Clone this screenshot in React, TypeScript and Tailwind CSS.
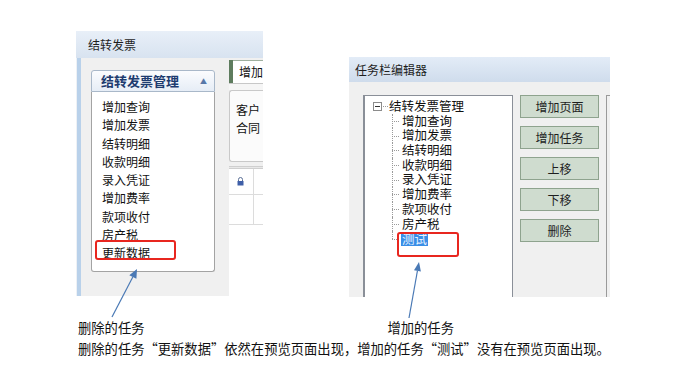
const cjk = "font-['Noto_Sans_CJK_SC','Liberation_Sans',sans-serif]";

const leftItems = ["增加查询", "增加发票", "结转明细", "收款明细", "录入凭证", "增加费率", "款项收付", "房产税", "更新数据"];
const treeItems = ["增加查询", "增加发票", "结转明细", "收款明细", "录入凭证", "增加费率", "款项收付", "房产税", "测试"];
const buttons = ["增加页面", "增加任务", "上移", "下移", "删除"];

function PreviewShot() {
  return (
    <div className="ml-[76px] mt-[31px] flex h-[265px] w-[187px] flex-col">
      <div className="flex h-[27px] items-center bg-linear-to-b from-[#e8eff8] to-[#d8e3f0] pl-[12px] text-[12px] text-[#1e1e1e]">
        结转发票
      </div>
      <div className="flex flex-1">
        <div className="w-[2px] bg-[#eef1f5]" />
        <div className="w-[7px] bg-[#b9d1ea]" />
        <div className="flex flex-1 bg-[#f0f0f0]">
          <div className="ml-[10px] mt-[12px] flex h-[202px] w-[124px] flex-col">
            <div className="flex h-[22px] items-center justify-between rounded-t-[3px] border border-[#a9b8c9] bg-linear-to-b from-[#fbfcfe] to-[#e6edf6] pl-[9px] pr-[7px]">
              <span className="text-[13px] font-bold text-[#1d3b6f]">结转发票管理</span>
              <span className="text-[7px] text-[#5878a8]">▲</span>
            </div>
            <div className="flex-1 rounded-b-[3px] border border-t-0 border-[#a3a3a3] bg-white pl-[10px] pt-[6px]">
              {leftItems.map((t) => (
                <div key={t} className="text-[12px] leading-[18.3px] text-[#111]">
                  {t}
                </div>
              ))}
            </div>
          </div>
          <div className="ml-[14px] mt-[2px] flex flex-1 flex-col overflow-hidden">
            <div className="flex h-[23px]">
              <div className="w-[4px] bg-[#5e7c5e]" />
              <div className="flex-1 border-t border-[#9fb09f] bg-white pl-[6px] text-[12px] leading-[22px] whitespace-nowrap text-[#111]">
                增加
              </div>
            </div>
            <div className="h-[7px] border-t border-[#c8c8c8] bg-[#f6f6f6]" />
            <div className="h-[72px] rounded-l-[3px] border border-r-0 border-[#c9c9c9] bg-[#fbfbfb] pl-[6px] pt-[10px] text-[12px] leading-[18px] whitespace-nowrap text-[#111]">
              <div>客户</div>
              <div>合同</div>
            </div>
            <div className="mt-[4px] h-[3px] border-y border-[#cfcfcf] bg-[#e8e8e8]" />
            <div className="flex h-[26px] border-b border-[#dcdcdc] bg-white">
              <div className="flex w-[25px] items-center justify-center border-r border-[#dcdcdc]">
                <svg width="7" height="9" viewBox="0 0 7 9">
                  <path d="M1.5 4V2.5a2 2 0 0 1 4 0V4" fill="none" stroke="#5b6f96" strokeWidth="1" />
                  <rect x="0.5" y="4" width="6" height="4.5" fill="#3f5fa8" />
                </svg>
              </div>
            </div>
            <div className="flex h-[30px] border-b border-[#dcdcdc] bg-white">
              <div className="w-[25px] border-r border-[#dcdcdc]" />
            </div>
            <div className="flex-1 bg-white" />
          </div>
        </div>
      </div>
    </div>
  );
}

function TreeRow({ label, last, selected }: { label: string; last: boolean; selected?: boolean }) {
  return (
    <div className="flex h-[14.7px] items-center">
      <div className="relative ml-[27px] w-[7px] self-stretch">
        <div
          className={
            last
              ? "absolute left-0 top-0 h-1/2 border-l border-dotted border-[#9a9a9a]"
              : "absolute left-0 top-0 h-full border-l border-dotted border-[#9a9a9a]"
          }
        />
        <div className="absolute left-0 top-1/2 w-full border-t border-dotted border-[#9a9a9a]" />
      </div>
      <span
        className={
          selected
            ? "ml-[2px] bg-[#3a8ee6] px-[1px] text-[12.5px] leading-[14px] text-[#e8f2ff]"
            : "ml-[3px] text-[12.5px] leading-[14.7px] text-[#111]"
        }
      >
        {label}
      </span>
    </div>
  );
}

function EditorShot() {
  return (
    <div className="ml-[86px] mt-[57px] flex h-[240px] w-[261px] flex-col">
      <div className="flex h-[25px] items-center bg-linear-to-b from-[#e3ecf7] to-[#cfdcec] pl-[6px] text-[12px] text-[#1e1e1e]">
        任务栏编辑器
      </div>
      <div className="flex flex-1 bg-[#f0f0f0]">
        <div className="ml-[14px] mt-[13px] w-[150px] border-l-2 border-r border-t border-[#8a8f98] bg-white pt-[3px]">
          <div className="flex h-[14.7px] items-center pl-[8px]">
            <div className="flex h-[9px] w-[9px] items-center justify-center border border-[#8c8c8c] bg-white">
              <div className="h-px w-[5px] bg-[#333]" />
            </div>
            <div className="ml-px w-[5px] border-t border-dotted border-[#9a9a9a]" />
            <span className="ml-[1px] text-[12.5px] leading-[14.7px] text-[#111]">结转发票管理</span>
          </div>
          {treeItems.map((t, i) => (
            <TreeRow key={t} label={t} last={i === treeItems.length - 1} selected={i === treeItems.length - 1} />
          ))}
        </div>
        <div className="ml-[7px] mt-[13px] flex w-[79px] flex-col gap-[8px]">
          {buttons.map((b) => (
            <div
              key={b}
              className="flex h-[23px] items-center justify-center border border-[#8ea38e] bg-[#cfdccf] text-[12px] text-[#1e1e1e]"
            >
              {b}
            </div>
          ))}
        </div>
        <div className="ml-[7px] mt-[13px] flex-1 border-l border-t border-[#9a9a9a] bg-[#f0f0f0]" />
      </div>
    </div>
  );
}

export default function App() {
  return (
    <div className={`relative flex h-[383px] w-[693px] flex-col overflow-hidden bg-white ${cjk}`}>
      <div className="flex h-[297px] items-start">
        <PreviewShot />
        <EditorShot />
      </div>
      <div className="mt-[22px] flex h-[18px] text-[13.3px] leading-[18px] text-[#111]">
        <span className="ml-[78px]">删除的任务</span>
        <span className="ml-[243px]">增加的任务</span>
      </div>
      <div className="ml-[78px] mt-[3px] text-[13.3px] leading-[18px] whitespace-nowrap text-[#111]">
        删除的任务“更新数据”依然在预览页面出现，增加的任务“测试”没有在预览页面出现。
      </div>

      <div className="pointer-events-none absolute left-[95px] top-[240px] h-[20px] w-[81px] rounded-[3px] border-[2.5px] border-[#e8261f]" />
      <div className="pointer-events-none absolute left-[397px] top-[232px] h-[25px] w-[62px] rounded-[3px] border-[2.5px] border-[#e8261f]" />

      <svg className="pointer-events-none absolute left-0 top-0" width="693" height="383">
        <line x1="112" y1="317" x2="132.8" y2="277" stroke="#4a79b5" strokeWidth="1.2" />
        <polygon points="137,269 136.4,278.8 129.3,275.2" fill="#4a79b5" />
        <line x1="409" y1="318" x2="417.4" y2="271" stroke="#4a79b5" strokeWidth="1.2" />
        <polygon points="419,262 420.9,271.5 414,270.2" fill="#4a79b5" />
      </svg>
    </div>
  );
}
